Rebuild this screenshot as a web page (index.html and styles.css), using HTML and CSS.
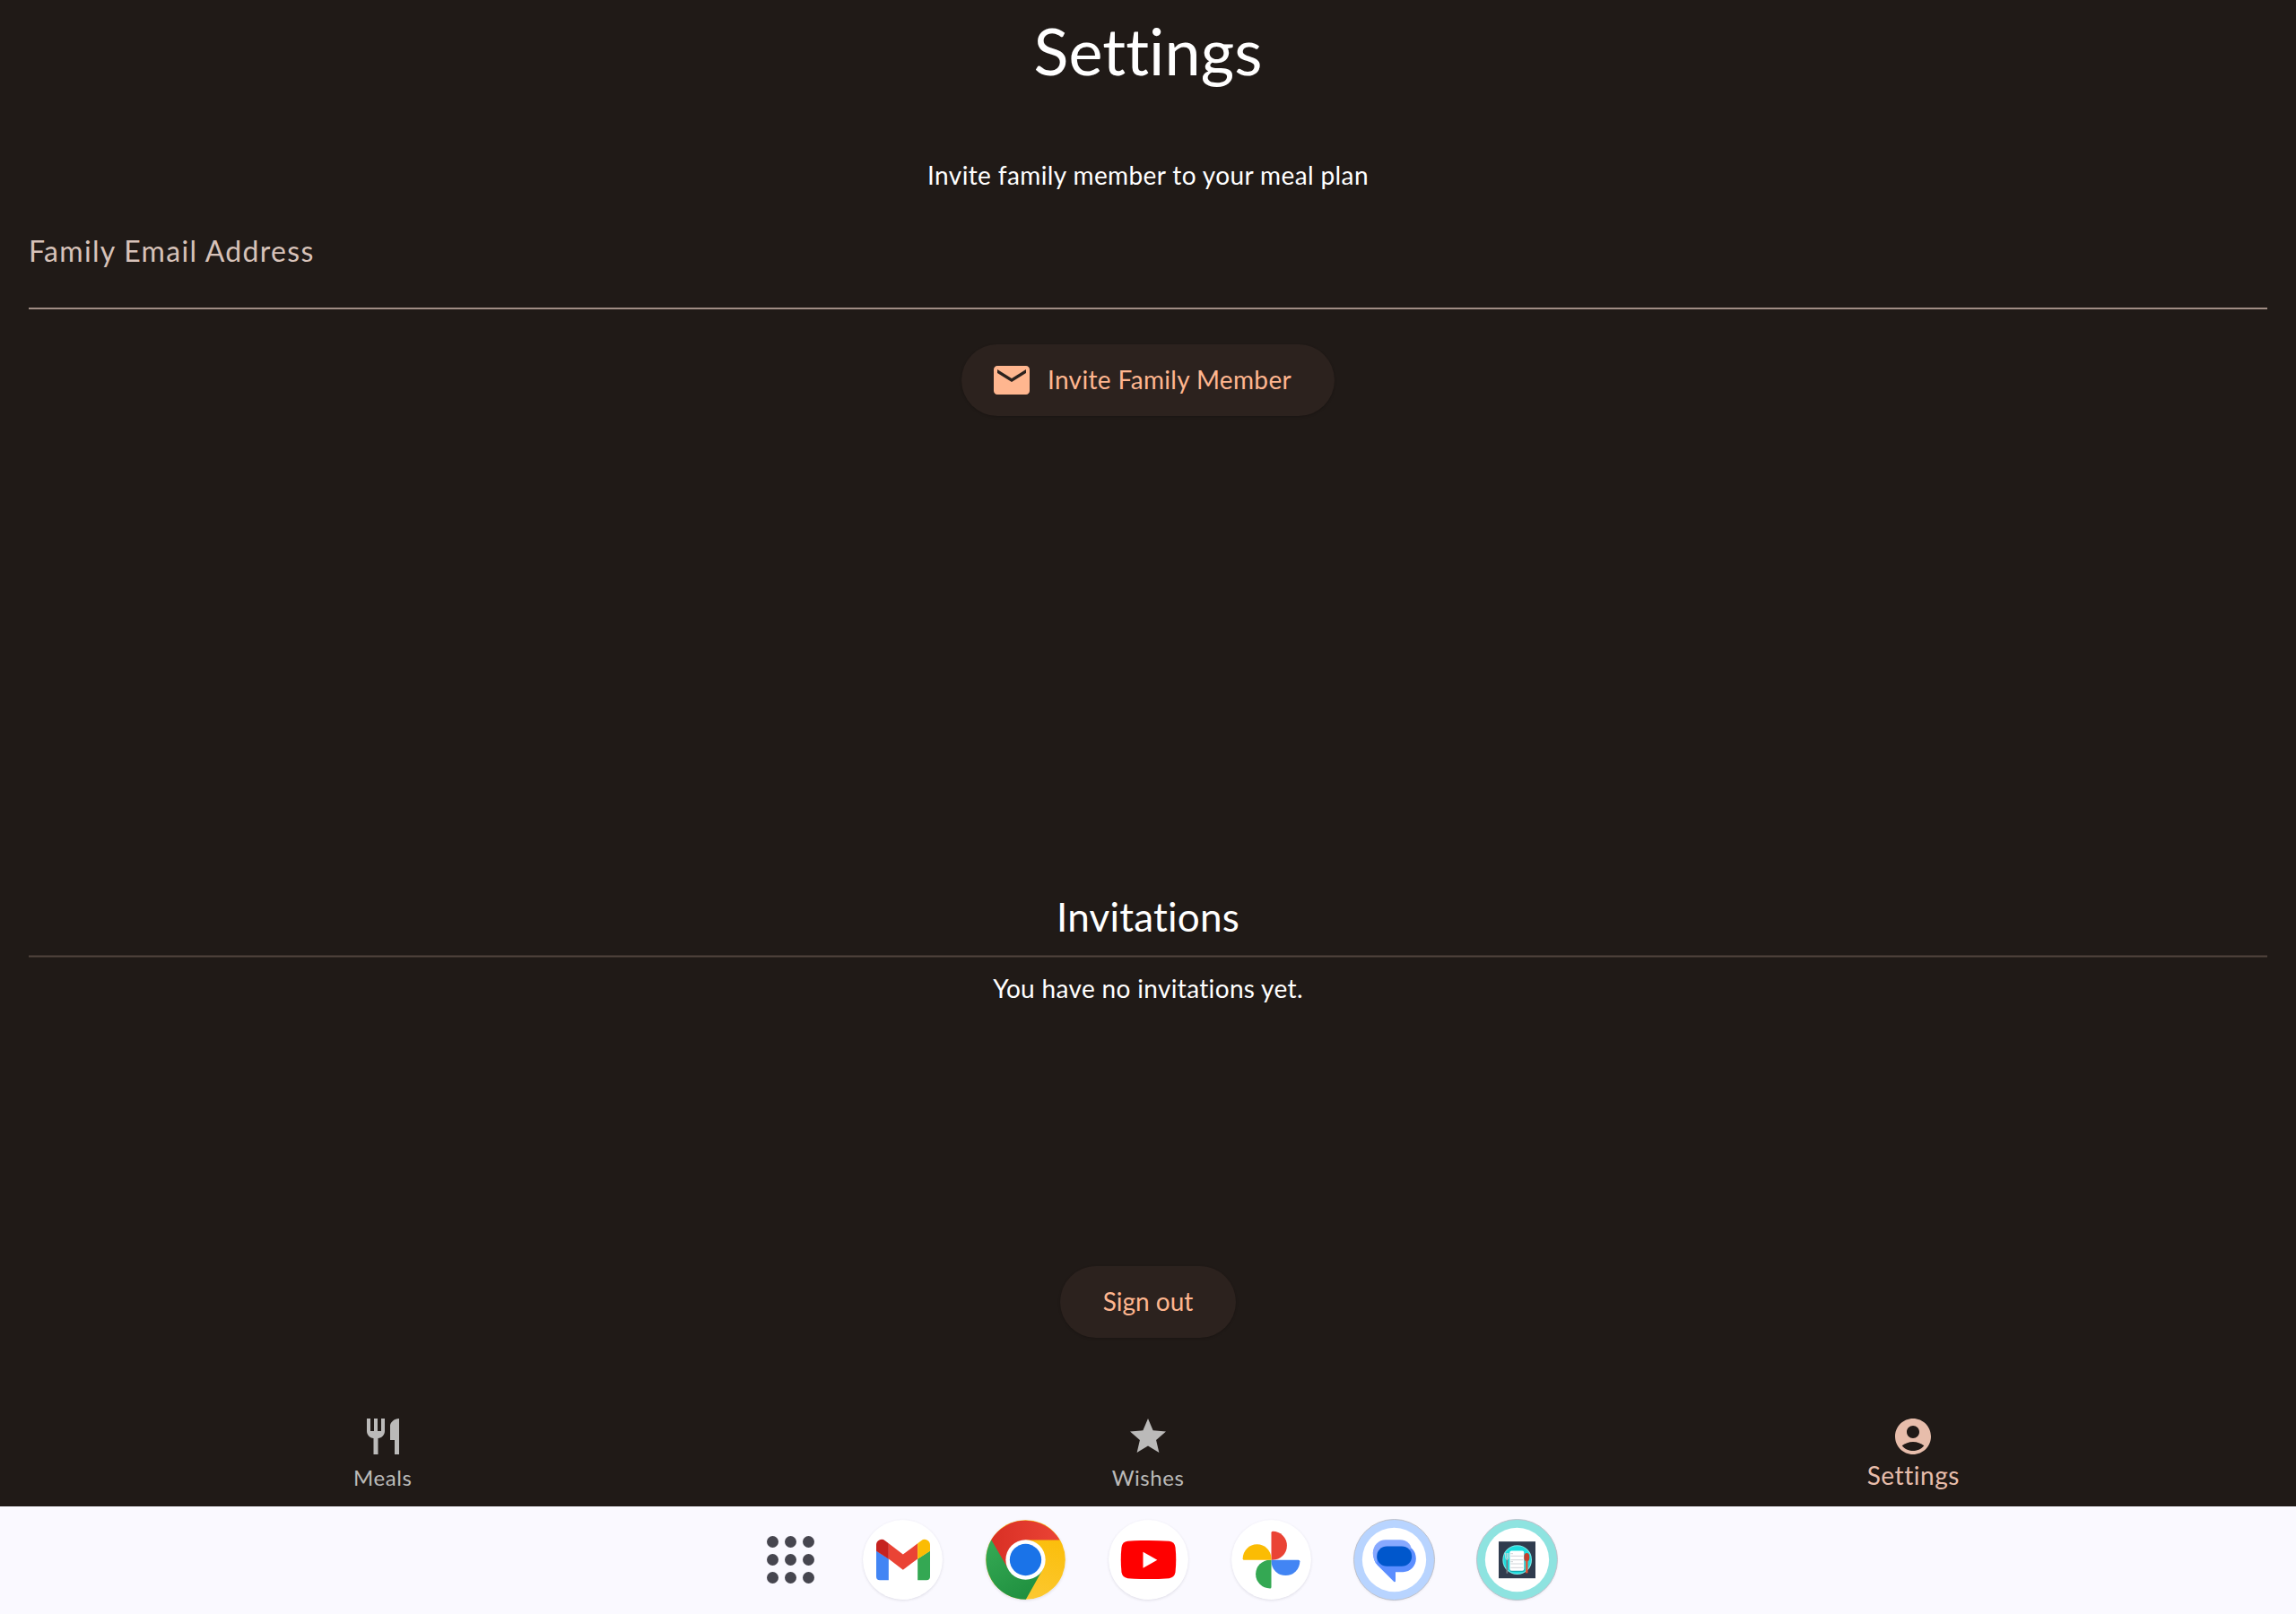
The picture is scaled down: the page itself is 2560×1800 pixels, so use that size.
FILE: index.html
```html
<!DOCTYPE html>
<html lang="en">
<head>
<meta charset="utf-8">
<title>Settings</title>
<link rel="stylesheet" href="styles.css">
</head>
<body>
<main class="screen">
  <h1 class="title">Settings</h1>
  <section class="invite">
    <p class="body-text">Invite family member to your meal plan</p>
    <div class="field"><span class="field-label">Family Email Address</span></div>
    <button class="button button-icon">
      <svg class="icon" viewBox="0 0 24 24"><path d="M20 4H4c-1.1 0-1.99.9-1.99 2L2 18c0 1.1.9 2 2 2h16c1.1 0 2-.9 2-2V6c0-1.1-.9-2-2-2zm0 4l-8 5-8-5V6l8 5 8-5v2z"/></svg>
      <span>Invite Family Member</span>
    </button>
  </section>
  <section class="invitations">
    <h2 class="subtitle">Invitations</h2>
    <div class="divider"></div>
    <p class="body-text">You have no invitations yet.</p>
  </section>
  <button class="button"><span>Sign out</span></button>
</main>
<nav class="tabs">
  <a class="tab">
    <svg class="icon" viewBox="0 0 24 24"><path d="M11 9H9V2H7v7H5V2H3v7c0 2.12 1.66 3.84 3.75 3.97V22h2.5v-9.03C11.34 12.84 13 11.12 13 9V2h-2v7zm5-3v8h2.5v8H21V2c-2.76 0-5 2.24-5 4z"/></svg>
    <span>Meals</span>
  </a>
  <a class="tab">
    <svg class="icon" viewBox="0 0 24 24"><path d="M12 17.27L18.18 21l-1.64-7.03L22 9.24l-7.19-.61L12 2 9.19 8.63 2 9.24l5.46 4.73L5.82 21z"/></svg>
    <span>Wishes</span>
  </a>
  <a class="tab tab-active">
    <svg class="icon" viewBox="0 0 24 24"><path d="M12 2C6.48 2 2 6.48 2 12s4.48 10 10 10 10-4.48 10-10S17.52 2 12 2zm0 4c1.93 0 3.5 1.57 3.5 3.5S13.93 13 12 13s-3.5-1.57-3.5-3.5S10.07 6 12 6zm0 14c-2.03 0-4.43-.82-6.14-2.88C7.55 15.8 9.68 15 12 15s4.45.8 6.14 2.12C16.43 19.18 14.03 20 12 20z"/></svg>
    <span>Settings</span>
  </a>
</nav>
<footer class="dock">
  <div class="launcher"><i></i><i></i><i></i><i></i><i></i><i></i><i></i><i></i><i></i></div>
  <!-- Gmail -->
  <svg class="app" viewBox="0 0 267 267">
    <circle cx="133.5" cy="133.5" r="132.5" fill="#fff"/>
    <path fill="#4285f4" d="M45 103.500L86.500 130.500V201.500H57a12 12 0 0 1-12-12z"/>
    <path fill="#34a853" d="M225 103.500L183.500 130.500V201.500H213a12 12 0 0 0 12-12z"/>
    <path fill="#ea4335" d="M86.500 79L134.500 115.500L183.500 79V130.500L134.500 167L86.500 130.500z"/>
    <path fill="#c5221f" d="M45 104V84a18 18 0 0 1 29.500-14L86.500 79V131z"/>
    <path fill="#fbbc04" d="M225 104V84a18 18 0 0 0-29.500-14L183.500 79V131z"/>
  </svg>
  <!-- Chrome -->
  <svg class="app" viewBox="0 0 267 267">
    <defs>
      <linearGradient id="cr"><stop offset="0" stop-color="#d93025"/><stop offset="1" stop-color="#ea4335"/></linearGradient>
      <linearGradient id="cg" x1=".8" y1="1" x2=".2" y2="0"><stop offset="0" stop-color="#1e8e3e"/><stop offset="1" stop-color="#34a853"/></linearGradient>
      <linearGradient id="cy" x1=".3" y1="1" x2=".6" y2="0"><stop offset="0" stop-color="#fcc934"/><stop offset="1" stop-color="#fbbc04"/></linearGradient>
    </defs>
    <circle cx="133.500" cy="133.500" r="133" fill="url(#cy)"/>
    <path fill="url(#cg)" d="M19 67L133.500 133.500L190.500 166.500L134.500 266.500A133 133 0 0 1 19 67z"/>
    <path fill="url(#cr)" d="M19 67A133 133 0 0 1 248 67.500H133.500V133.500L76.500 166.500z"/>
    <circle cx="133.500" cy="133.500" r="66.500" fill="#fff"/>
    <circle cx="133.500" cy="133.500" r="53" fill="#1a73e8"/>
  </svg>
  <!-- YouTube -->
  <svg class="app" viewBox="0 0 267 267">
    <circle cx="133.5" cy="133.5" r="132.5" fill="#fff"/>
    <path fill="#f00" d="M64 71.500Q133 66 203 71.500Q221 74 223.500 92Q228 133 223.500 175Q221 193 203 195.500Q133 201 64 195.500Q46 193 43.500 175Q39 133 43.500 92Q46 74 64 71.500z"/>
    <path fill="#fff" d="M115.500 107L163 134L115.500 161z"/>
  </svg>
  <!-- Photos -->
  <svg class="app" viewBox="0 0 267 267">
    <circle cx="133.5" cy="133.5" r="132.5" fill="#fff"/>
    <path fill="#ea4335" d="M133.500 134V43a4.500 4.500 0 0 1 4.500-4.500a47.500 47.500 0 0 1 0 95.500z"/>
    <path fill="#4285f4" transform="rotate(90 133.500 134)" d="M133.500 134V43a4.500 4.500 0 0 1 4.500-4.500a47.500 47.500 0 0 1 0 95.500z"/>
    <path fill="#34a853" transform="rotate(180 133.500 134)" d="M133.500 134V43a4.500 4.500 0 0 1 4.500-4.500a47.500 47.500 0 0 1 0 95.500z"/>
    <path fill="#fbbc04" transform="rotate(270 133.500 134)" d="M133.500 134V43a4.500 4.500 0 0 1 4.500-4.500a47.500 47.500 0 0 1 0 95.500z"/>
  </svg>
  <!-- Messages -->
  <svg class="app" viewBox="0 0 267 267">
    <circle cx="133.5" cy="133.5" r="135" fill="#b8d4ff" stroke="#bfc2cb" stroke-width="3"/>
    <circle cx="133.5" cy="133.5" r="107" fill="#fff"/>
    <path fill="#87a9ff" d="M105 66.500H153C178 66.500 193 85 193 108V150H80C66 140 62.500 125 62.500 110C62.500 85 81 66.500 105 66.500z"/>
    <path fill="#5b8eff" d="M192 95C202 104 206.500 117 206.500 130C206.500 155 188 174.500 163 174.500H138V205Q137 210 132 206L78 152Q70 145 67 134L80 124L180 100z"/>
    <path fill="#87a9ff" d="M62.500 110C62.500 123 67 136 75.500 145V100H64z"/>
    <rect x="75.500" y="88.500" width="117" height="67" rx="33.500" fill="#0057cc"/>
  </svg>
  <!-- Meal planner -->
  <svg class="app" viewBox="0 0 267 267">
    <circle cx="133.5" cy="133.5" r="135" fill="#8ee3e0" stroke="#bfc2cb" stroke-width="3"/>
    <circle cx="133.5" cy="133.5" r="107" fill="#fff"/>
    <rect x="72" y="72.500" width="123" height="123" fill="#303c4e"/>
    <circle cx="134" cy="134" r="49" fill="#7fe9e8"/>
    <circle cx="134" cy="134" r="46" fill="#1fdedf"/>
    <rect x="110" y="106" width="49" height="68" rx="6" fill="#18a9b0"/>
    <rect x="109" y="103.500" width="48" height="67" rx="6" fill="#fff"/>
    <path d="M112 113h8M112 140h8M112 121h42M112 134h42M112 147h42M112 160h42" stroke="#b9bec4" stroke-width="2"/>
    <path d="M100 130V179" stroke="#777c84" stroke-width="5"/>
    <path d="M95 111V124Q95 133 100 133T105 124V111M100 111V130" stroke="#d5dade" stroke-width="3" fill="none"/>
    <ellipse cx="166" cy="125" rx="9" ry="14" fill="#c43f2d"/>
    <path d="M166 136V178" stroke="#ea4c30" stroke-width="7"/>
  </svg>
</footer>
</body>
</html>
```
FILE: styles.css
```css
* { box-sizing: border-box; }
body {
  margin: 0;
  height: 1800px;
  display: flex;
  flex-direction: column;
  background: #201a17;
  color: #fff;
  font-family: Lato, sans-serif;
  font-variant-ligatures: none;
  overflow: hidden;
}
h1, h2, p { margin: 0; font-weight: 400; }
.screen {
  height: 1560px;
  padding: 6px 32px 0;
  display: flex;
  flex-direction: column;
  align-items: center;
}
.title { font-size: 72px; line-height: 100px; letter-spacing: .1px; }
.invite, .invitations {
  width: 100%;
  display: flex;
  flex-direction: column;
  align-items: center;
}
.invite { margin-top: 71px; }
.body-text { font-size: 28px; line-height: 36px; letter-spacing: .39px; }
.field {
  width: 100%;
  height: 98px;
  margin-top: 34px;
  padding-top: 12px;
  border-bottom: 2px solid #a08d84;
  color: #d7c2b9;
}
.field-label { display: block; font-size: 32px; line-height: 42px; letter-spacing: 1.3px; }
.button {
  height: 80px;
  padding: 0 48px;
  border: 0;
  border-radius: 40px;
  background: #2c221e;
  box-shadow: 0 1px 3px rgba(0, 0, 0, .2);
  color: #ffb68f;
  font: 400 28px/36px Lato, sans-serif;
  font-variant-ligatures: none;
  display: flex;
  align-items: center;
}
.button span { padding-bottom: 2px; }
.button-icon { margin-top: 39px; padding-left: 32px; gap: 16px; letter-spacing: .35px; }
.icon { width: 48px; height: 48px; fill: currentColor; flex: none; }
.invitations { margin-top: 531px; }
.subtitle { font-size: 44px; line-height: 54px; letter-spacing: .22px; }
.divider {
  width: 100%;
  height: 3px;
  margin-top: 16px;
  background: #51443d;
  border: solid #382f2a;
  border-width: 1px 0;
}
.invitations .body-text { margin-top: 16px; letter-spacing: .34px; }
.invitations + .button { margin-top: 292px; }
.tabs {
  height: 120px;
  display: grid;
  grid-template-columns: repeat(3, 1fr);
}
.tab {
  padding-top: 18px;
  display: flex;
  flex-direction: column;
  align-items: center;
  color: #bbbab9;
  font-size: 24px;
  line-height: 30px;
  letter-spacing: .55px;
}
.tab span { margin-top: 7px; }
.tab-active { color: #e7bdab; font-size: 28px; }
.tab-active span { margin-top: 4px; }
.dock {
  height: 120px;
  padding: 15px 0 0 855px;
  display: flex;
  gap: 48px;
  background: #faf9ff;
}
.launcher {
  width: 53px;
  height: 53px;
  margin: 18px 6px 0 0;
  display: grid;
  grid-template-columns: repeat(3, 13px);
  justify-content: space-between;
  align-content: space-between;
}
.launcher i { height: 13px; border-radius: 50%; background: #46464f; }
.app {
  width: 89px;
  height: 89px;
  flex: none;
  overflow: visible;
  border-radius: 50%;
  box-shadow: 0 1px 3px rgba(60, 60, 80, .14);
}
```
